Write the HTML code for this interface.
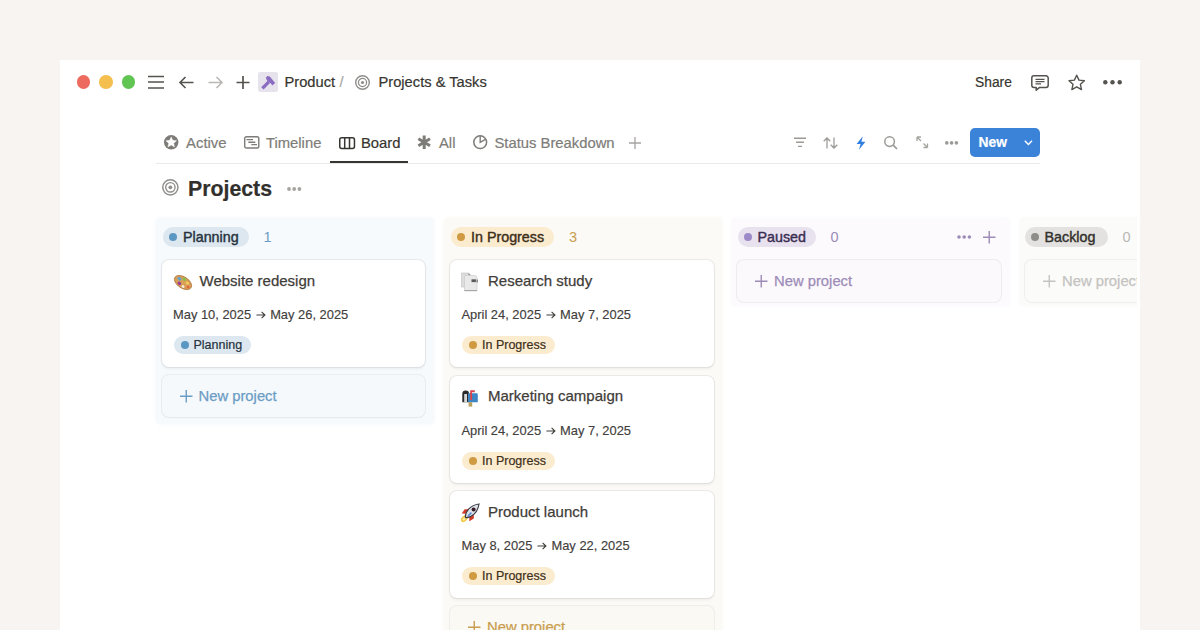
<!DOCTYPE html>
<html><head><meta charset="utf-8">
<style>
*{margin:0;padding:0;box-sizing:border-box}
html,body{width:1200px;height:630px;overflow:hidden;background:#f7f4f1;font-family:"Liberation Sans",sans-serif;color:#37352f}
.win{position:absolute;left:60px;top:60px;width:1080px;height:570px;background:#fff}
.clip{position:absolute;left:0;top:0;width:1137px;height:630px;overflow:hidden}
.a{position:absolute;white-space:nowrap;line-height:1;-webkit-text-stroke:0.2px currentColor}
svg{display:block;position:absolute;overflow:visible}
.tl{position:absolute;width:13.5px;height:13.5px;border-radius:50%;top:75.25px}
.col{position:absolute;top:218px;width:278px;border-radius:4px}
.pill{position:absolute;height:20px;border-radius:10px;top:227px;font-size:14.3px;-webkit-text-stroke:0.4px currentColor;line-height:20px;padding-left:20px;white-space:nowrap}
.pill i{position:absolute;left:6px;top:6px;width:8px;height:8px;border-radius:50%}
.cnt{position:absolute;top:227px;font-size:14.5px;line-height:20px}
.card{position:absolute;width:263.5px;height:107px;background:#fff;border-radius:7px;box-shadow:0 0 0 1px rgba(55,53,47,0.075),0 1.5px 3px rgba(15,15,15,0.06)}
.ct{position:absolute;left:38px;top:10.5px;font-size:15px;line-height:20px;color:#3f3d39;-webkit-text-stroke:0.25px #3f3d39;white-space:nowrap}
.cd{position:absolute;left:11.5px;top:47px;font-size:12.9px;-webkit-text-stroke:0.15px currentColor;line-height:16px;color:#42403c;white-space:nowrap}
.cp{position:absolute;left:12px;top:76px;height:18px;border-radius:9px;font-size:12.5px;-webkit-text-stroke:0.2px currentColor;line-height:18px;padding-left:20px;padding-right:9px;white-space:nowrap}
.cp i{position:absolute;left:7px;top:5px;width:8px;height:8px;border-radius:50%}
.np{position:absolute;width:263.5px;height:42px;border-radius:7px}
.np span{position:absolute;left:37px;top:11px;font-size:14.8px;-webkit-text-stroke:0.25px currentColor;line-height:20px;white-space:nowrap}
.em{position:absolute;left:12px;top:14px;width:18px;height:18px}
</style></head><body>
<div class="win"></div>
<div class="clip">
<!-- traffic lights -->
<div class="tl" style="left:76.75px;background:#ed6a5e"></div>
<div class="tl" style="left:99.25px;background:#f4bf4f"></div>
<div class="tl" style="left:121.75px;background:#61c554"></div>
<!-- hamburger -->
<svg style="left:148px;top:74px" width="16" height="16"><path d="M0 2.5H16M0 8H16M0 14H16" stroke="#55534e" stroke-width="1.6"/></svg>
<!-- back -->
<svg style="left:179px;top:76px" width="15" height="13"><path d="M14.5 6.5H1M6.5 1L1 6.5L6.5 12" stroke="#55534e" stroke-width="1.6" fill="none"/></svg>
<!-- forward -->
<svg style="left:208px;top:76px" width="15" height="13"><path d="M0.5 6.5H14M8.5 1L14 6.5L8.5 12" stroke="#b9b8b5" stroke-width="1.6" fill="none"/></svg>
<!-- plus -->
<svg style="left:236px;top:76px" width="14" height="14"><path d="M7 0V13M0.5 6.5H13.5" stroke="#55534e" stroke-width="1.7" fill="none"/></svg>
<!-- hammer -->
<div style="position:absolute;left:257.5px;top:72px;width:20.5px;height:19.5px;border-radius:2px;background:#e7e3ed"></div>
<svg style="left:257.5px;top:72px" width="21" height="20"><path d="M4.4 16.4L10.8 9.8" stroke="#8a6cc2" stroke-width="3.3"/><path d="M7.8 5.8L9.4 4.1L11.8 4.4L17.2 10.9L14.2 13.6L13.2 11.8L11.2 10.3L9 8.4Z" fill="#8a6cc2"/></svg>
<div class="a" style="left:284.5px;top:74.5px;font-size:14.7px;color:#37352f">Product</div>
<div class="a" style="left:339.5px;top:74.5px;font-size:14.7px;color:#a8a7a3">/</div>
<!-- target icon -->
<svg style="left:354.5px;top:75px" width="15" height="15"><circle cx="7.5" cy="7.5" r="6.8" stroke="#8f8e8a" stroke-width="1.4" fill="none"/><circle cx="7.5" cy="7.5" r="4.1" stroke="#8f8e8a" stroke-width="1.3" fill="none"/><circle cx="7.5" cy="7.5" r="1.6" fill="#8f8e8a"/></svg>
<div class="a" style="left:378.5px;top:74.5px;font-size:14.7px;color:#37352f">Projects &amp; Tasks</div>
<!-- right top -->
<div class="a" style="left:975px;top:76px;font-size:13.8px;color:#37352f">Share</div>
<svg style="left:1031px;top:75px" width="18" height="16"><path d="M3 0.8H15A2.2 2.2 0 0 1 17.2 3V10.2A2.2 2.2 0 0 1 15 12.4H8.6L5.2 15.2V12.4H3A2.2 2.2 0 0 1 0.8 10.2V3A2.2 2.2 0 0 1 3 0.8Z" stroke="#55534e" stroke-width="1.5" fill="none" stroke-linejoin="round"/><path d="M4.5 4.3H13.5M4.5 6.6H13.5M4.5 8.9H10" stroke="#55534e" stroke-width="1.2"/></svg>
<svg style="left:1068px;top:74px" width="18" height="17"><path d="M8.7 1.2L11 6.1L16.4 6.7L12.4 10.3L13.5 15.6L8.7 12.9L3.9 15.6L5 10.3L1 6.7L6.4 6.1Z" stroke="#55534e" stroke-width="1.4" fill="none" stroke-linejoin="round"/></svg>
<svg style="left:1103px;top:79.5px" width="19" height="5"><circle cx="2.3" cy="2.3" r="2.2" fill="#55534e"/><circle cx="9.5" cy="2.3" r="2.2" fill="#55534e"/><circle cx="16.7" cy="2.3" r="2.2" fill="#55534e"/></svg>

<!-- tabs -->
<svg style="left:164px;top:135px" width="15" height="15"><circle cx="7.2" cy="7.3" r="7.2" fill="#7d7c78"/><path d="M7.2 1.9L8.75 5.35L12.5 5.75L9.7 8.25L10.5 11.95L7.2 10.05L3.9 11.95L4.7 8.25L1.9 5.75L5.65 5.35Z" fill="#fff" stroke="#fff" stroke-width="0.4" stroke-linejoin="round"/></svg>
<div class="a" style="left:186px;top:136px;font-size:14.9px;color:#7d7c78">Active</div>
<svg style="left:243.5px;top:136px" width="16" height="13"><rect x="0.7" y="0.7" width="14.1" height="11.3" rx="1.8" stroke="#7d7c78" stroke-width="1.4" fill="none"/><path d="M2.5 3.6H9M4.3 6.3H11.3M7.3 8.6H13" stroke="#7d7c78" stroke-width="1.4"/></svg>
<div class="a" style="left:266px;top:136px;font-size:14.8px;color:#7d7c78">Timeline</div>
<svg style="left:338.5px;top:137px" width="16" height="12"><rect x="0.75" y="0.75" width="14.7" height="10.8" rx="2" stroke="#37352f" stroke-width="1.5" fill="none"/><path d="M5.7 1V11.5M10.5 1V11.5" stroke="#37352f" stroke-width="1.5"/></svg>
<div class="a" style="left:361px;top:136px;font-size:14.8px;color:#37352f;-webkit-text-stroke:0.2px #37352f">Board</div>
<div style="position:absolute;left:330px;top:161px;width:78px;height:2px;background:#37352f"></div>
<svg style="left:416.5px;top:135px" width="15" height="15"><path d="M7.2 0.5V14M1.4 3.8L13 10.7M1.4 10.7L13 3.8" stroke="#7d7c78" stroke-width="3" stroke-linecap="butt"/></svg>
<div class="a" style="left:439px;top:136px;font-size:14.8px;color:#7d7c78">All</div>
<svg style="left:472.5px;top:135px" width="15" height="15"><circle cx="7.2" cy="7.2" r="6.4" stroke="#7d7c78" stroke-width="1.5" fill="none"/><path d="M7.2 0.8V7.4L12.9 4.2" stroke="#7d7c78" stroke-width="1.4" fill="none"/></svg>
<div class="a" style="left:494.5px;top:136px;font-size:14.8px;color:#7d7c78">Status Breakdown</div>
<svg style="left:629px;top:136.5px" width="12" height="12"><path d="M6 0V12M0 6H12" stroke="#a5a4a0" stroke-width="1.3"/></svg>
<div style="position:absolute;left:156px;top:163px;width:884px;height:1px;background:#e9e9e7"></div>

<!-- toolbar right -->
<svg style="left:794px;top:137px" width="12" height="11"><path d="M0 1.2H12M2 5.3H10M4 9.4H8" stroke="#9b9a97" stroke-width="1.4"/></svg>
<svg style="left:822.5px;top:136.5px" width="15" height="12"><path d="M4 11.5V1M0.7 4.3L4 1L7.3 4.3M11 0.5V11M7.7 7.7L11 11L14.3 7.7" stroke="#9b9a97" stroke-width="1.25" fill="none"/></svg>
<svg style="left:855.5px;top:135.5px" width="10" height="14"><path d="M6.8 0.2L0.6 8H4.6L3 13.8L9.4 5.8H5.4Z" fill="#2f7ee0"/></svg>
<svg style="left:884px;top:135.5px" width="14" height="14"><circle cx="5.6" cy="5.6" r="4.8" stroke="#9b9a97" stroke-width="1.5" fill="none"/><path d="M9.2 9.2L13 13" stroke="#9b9a97" stroke-width="1.7"/></svg>
<svg style="left:915.5px;top:136px" width="13" height="13"><path d="M1 1L5 5M1 1V5M1 1H5M11.5 11.5L7.5 7.5M11.5 11.5V7.5M11.5 11.5H7.5" stroke="#a5a4a0" stroke-width="1.3" fill="none"/></svg>
<svg style="left:945px;top:140.5px" width="14" height="4"><circle cx="1.8" cy="1.9" r="1.8" fill="#9b9a97"/><circle cx="6.6" cy="1.9" r="1.8" fill="#9b9a97"/><circle cx="11.4" cy="1.9" r="1.8" fill="#9b9a97"/></svg>
<div style="position:absolute;left:970px;top:128px;width:70px;height:28.5px;border-radius:5px;background:#3b82d9"></div>
<div class="a" style="left:978.5px;top:135.5px;font-size:13.8px;font-weight:bold;color:#fff">New</div>
<svg style="left:1023.5px;top:140px" width="9" height="6"><path d="M0.8 0.8L4.4 4.4L8 0.8" stroke="#fff" stroke-width="1.4" fill="none"/></svg>

<!-- title -->
<svg style="left:162px;top:179.3px" width="17" height="17"><circle cx="8.35" cy="8.35" r="7.6" stroke="#8f8e8a" stroke-width="1.5" fill="none"/><circle cx="8.35" cy="8.35" r="4.7" stroke="#8f8e8a" stroke-width="1.4" fill="none"/><circle cx="8.35" cy="8.35" r="1.9" fill="#8f8e8a"/></svg>
<div class="a" style="left:188px;top:178.5px;font-size:21.3px;font-weight:bold;color:#32302c">Projects</div>
<svg style="left:286.5px;top:186.5px" width="15" height="4"><circle cx="2" cy="2" r="1.9" fill="#a5a4a0"/><circle cx="7.2" cy="2" r="1.9" fill="#a5a4a0"/><circle cx="12.4" cy="2" r="1.9" fill="#a5a4a0"/></svg>

<!-- columns -->
<div class="col" style="left:156px;height:206px;background:#f7fafd;box-shadow:0 0 3px 1px #f7fafd"></div>
<div class="col" style="left:444px;height:420px;background:#fbfaf6;box-shadow:0 0 3px 1px #fbfaf6"></div>
<div class="col" style="left:731.5px;height:88px;background:#fcfafd;box-shadow:0 0 3px 1px #fcfafd"></div>
<div class="col" style="left:1019.5px;height:88px;background:#fbfbfa;box-shadow:0 0 3px 1px #fbfbfa"></div>

<!-- Planning -->
<div class="pill" style="left:163px;width:86px;background:#dde7ef;color:#25323d"><i style="background:#5b97c3"></i>Planning</div>
<div class="cnt" style="left:263.5px;color:#6b9cc4">1</div>
<div class="card" style="left:161.5px;top:260px">
  
  <div class="ct">Website redesign</div>
  <div class="cd">May 10, 2025<svg style="position:relative;display:inline-block;vertical-align:0px;margin:0 4.5px 0 5px" width="9.5" height="8"><path d="M0.4 4H8.9M5.6 0.9L8.9 4L5.6 7.1" stroke="#42403c" stroke-width="1.15" fill="none"/></svg>May 26, 2025</div>
  <div class="cp" style="background:#dde7ef;color:#25323d"><i style="background:#5b97c3"></i>Planning</div>
</div>
<div class="np" style="left:161.5px;top:375px;background:#f6f9fc;box-shadow:0 0 0 1px rgba(55,53,47,0.06),0 1px 2px rgba(15,15,15,0.03)"><svg style="left:18px;top:14.5px" width="12.5" height="12.5"><path d="M6.25 0V12.5M0 6.25H12.5" stroke="#6b9cc4" stroke-width="1.4"/></svg><span style="color:#6b9cc4">New project</span></div>

<!-- In Progress -->
<div class="pill" style="left:451px;width:102.5px;background:#fbecd0;color:#3d2f1a"><i style="background:#cf9a42"></i>In Progress</div>
<div class="cnt" style="left:569px;color:#c99d4f">3</div>
<div class="card" style="left:450px;top:260px">
  <div class="ct">Research study</div>
  <div class="cd">April 24, 2025<svg style="position:relative;display:inline-block;vertical-align:0px;margin:0 4.5px 0 5px" width="9.5" height="8"><path d="M0.4 4H8.9M5.6 0.9L8.9 4L5.6 7.1" stroke="#42403c" stroke-width="1.15" fill="none"/></svg>May 7, 2025</div>
  <div class="cp" style="background:#fbecd0;color:#3d2f1a"><i style="background:#cf9a42"></i>In Progress</div>
</div>
<div class="card" style="left:450px;top:375.5px">
  <div class="ct">Marketing campaign</div>
  <div class="cd">April 24, 2025<svg style="position:relative;display:inline-block;vertical-align:0px;margin:0 4.5px 0 5px" width="9.5" height="8"><path d="M0.4 4H8.9M5.6 0.9L8.9 4L5.6 7.1" stroke="#42403c" stroke-width="1.15" fill="none"/></svg>May 7, 2025</div>
  <div class="cp" style="background:#fbecd0;color:#3d2f1a"><i style="background:#cf9a42"></i>In Progress</div>
</div>
<div class="card" style="left:450px;top:491px">
  <div class="ct">Product launch</div>
  <div class="cd">May 8, 2025<svg style="position:relative;display:inline-block;vertical-align:0px;margin:0 4.5px 0 5px" width="9.5" height="8"><path d="M0.4 4H8.9M5.6 0.9L8.9 4L5.6 7.1" stroke="#42403c" stroke-width="1.15" fill="none"/></svg>May 22, 2025</div>
  <div class="cp" style="background:#fbecd0;color:#3d2f1a"><i style="background:#cf9a42"></i>In Progress</div>
</div>
<div class="np" style="left:450px;top:606px;background:#fbf9f3;box-shadow:0 0 0 1px rgba(55,53,47,0.06)"><svg style="left:18px;top:14.5px" width="12.5" height="12.5"><path d="M6.25 0V12.5M0 6.25H12.5" stroke="#c99d4f" stroke-width="1.4"/></svg><span style="color:#c99d4f">New project</span></div>

<!-- Paused -->
<div class="pill" style="left:737.5px;width:78.5px;background:#e8e2ef;color:#3b2d52"><i style="background:#9c8ac8"></i>Paused</div>
<div class="cnt" style="left:830.5px;color:#9d8cb8">0</div>
<svg style="left:957px;top:234.5px" width="15" height="4"><circle cx="2" cy="2" r="1.8" fill="#9d8cb8"/><circle cx="7.2" cy="2" r="1.8" fill="#9d8cb8"/><circle cx="12.4" cy="2" r="1.8" fill="#9d8cb8"/></svg>
<svg style="left:982.5px;top:231px" width="12.5" height="12.5"><path d="M6.25 0V12.5M0 6.25H12.5" stroke="#9d8cb8" stroke-width="1.4"/></svg>
<div class="np" style="left:737px;top:260px;background:#fbf9fc;box-shadow:0 0 0 1px rgba(55,53,47,0.07)"><svg style="left:18px;top:14.5px" width="12.5" height="12.5"><path d="M6.25 0V12.5M0 6.25H12.5" stroke="#9d8cb8" stroke-width="1.4"/></svg><span style="color:#9d8cb8">New project</span></div>

<!-- Backlog -->
<div class="pill" style="left:1024.5px;width:83.5px;background:#e3e2e0;color:#32302c"><i style="background:#8e8d8a"></i>Backlog</div>
<div class="cnt" style="left:1122.5px;color:#b9b8b5">0</div>
<div class="np" style="left:1025px;top:260px;background:#fbfbfa;box-shadow:0 0 0 1px rgba(55,53,47,0.06)"><svg style="left:18px;top:14.5px" width="12.5" height="12.5"><path d="M6.25 0V12.5M0 6.25H12.5" stroke="#c4c3c0" stroke-width="1.4"/></svg><span style="color:#c4c3c0">New project</span></div>
<!-- emojis -->
<svg style="left:172.5px;top:274.5px" width="20" height="16"><g transform="rotate(33 10 7.5)"><ellipse cx="10" cy="7.5" rx="9.6" ry="5.6" fill="#d9a056" stroke="#b0733a" stroke-width="0.8"/><ellipse cx="5" cy="6.3" rx="2.2" ry="1.7" fill="#6aa3c8"/><ellipse cx="9.4" cy="4" rx="1.9" ry="1.5" fill="#86c04a"/><ellipse cx="14" cy="5.6" rx="1.7" ry="1.4" fill="#eed060"/><ellipse cx="16.6" cy="8.6" rx="1.5" ry="1.5" fill="#e2683e"/><ellipse cx="7.4" cy="10.2" rx="2" ry="1.6" fill="#9c3f9a"/><ellipse cx="12.2" cy="10.8" rx="1.5" ry="1.3" fill="#f2efe8"/></g></svg>
<svg style="left:460px;top:272px" width="18" height="20"><path d="M1.5 1H8.5L10.5 3V15H1.5Z" fill="#dcdcdc" stroke="#c2c2c2" stroke-width="0.6"/><path d="M8.5 1V3H10.5" fill="#8a8a8a"/><path d="M4.5 3.5H15.5L17 5V19H4.5Z" fill="#e9e9e9" stroke="#c6c6c6" stroke-width="0.6"/><path d="M4.5 18.2H17V19H4.5Z" fill="#9a9a9a"/><rect x="11.5" y="7.3" width="4.4" height="2.8" fill="#5a5a5a"/><rect x="16.6" y="7.5" width="1.2" height="3" fill="#707070"/></svg>
<svg style="left:461px;top:389px" width="18" height="18"><path d="M1.3 13.2V4.8A3.4 3.4 0 0 1 8.1 4.8V13.2Z" fill="#2a2a2a"/><rect x="3.2" y="5" width="2.8" height="8.2" fill="#d8d8d8"/><path d="M7 4.2H15.6A1.2 1.2 0 0 1 16.8 5.4V13.2H7Z" fill="#3e85c3"/><path d="M9.2 1.2H13.8V3.2H11V11H9.2Z" fill="#d9434b"/><rect x="7.6" y="13.2" width="3.6" height="4.4" fill="#b9a060"/></svg>
<svg style="left:461px;top:503px" width="19" height="19"><path d="M5.2 10.8L0.8 10.6L3.6 6.2L8.2 6.2Z" fill="#d23a26"/><path d="M8.2 13.8L8.4 18.2L12.8 15.4L12.8 10.8Z" fill="#d23a26"/><ellipse cx="3.4" cy="15.6" rx="2.6" ry="4" transform="rotate(45 3.4 15.6)" fill="#f3c63e"/><ellipse cx="3.2" cy="15.8" rx="1.3" ry="2.2" transform="rotate(45 3.2 15.8)" fill="#fbeaa0"/><path d="M4.4 14.6C4 8.4 9.4 2.2 18 1C16.8 9.6 10.6 15 4.4 14.6Z" fill="#dde1e8" stroke="#3a3a46" stroke-width="1.1"/><path d="M6.4 12.4L9.8 9L11 10.2L7.6 13.6Z" fill="#5b8fd0"/><circle cx="12.6" cy="6.4" r="2" fill="#3a1c28"/></svg>
</div>
</body></html>
